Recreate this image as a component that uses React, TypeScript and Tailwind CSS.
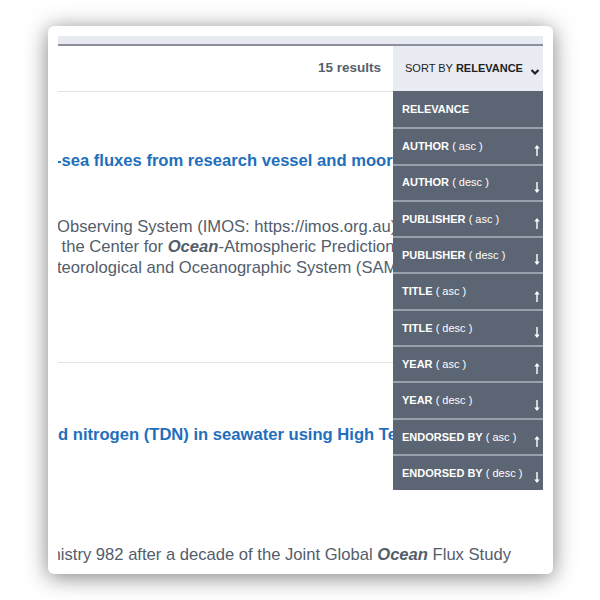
import React from "react";

const items: { label: string; suffix?: string; dir?: "up" | "down" }[] = [
  { label: "RELEVANCE" },
  { label: "AUTHOR", suffix: "( asc )", dir: "up" },
  { label: "AUTHOR", suffix: "( desc )", dir: "down" },
  { label: "PUBLISHER", suffix: "( asc )", dir: "up" },
  { label: "PUBLISHER", suffix: "( desc )", dir: "down" },
  { label: "TITLE", suffix: "( asc )", dir: "up" },
  { label: "TITLE", suffix: "( desc )", dir: "down" },
  { label: "YEAR", suffix: "( asc )", dir: "up" },
  { label: "YEAR", suffix: "( desc )", dir: "down" },
  { label: "ENDORSED BY", suffix: "( asc )", dir: "up" },
  { label: "ENDORSED BY", suffix: "( desc )", dir: "down" },
];

function Arrow({ dir }: { dir: "up" | "down" }) {
  return (
    <svg width="8" height="11" viewBox="0 0 8 11" className={dir === "down" ? "rotate-180" : ""}>
      <path d="M4 0 L1.3 3.6 L6.7 3.6 Z" fill="#ffffff" />
      <rect x="3.3" y="3" width="1.4" height="8" fill="#ffffff" />
    </svg>
  );
}

export default function App() {
  return (
    <div className="w-[600px] h-[600px] bg-white pt-[26px] pl-[48px]" style={{ fontFamily: '"Liberation Sans", Arial, sans-serif' }}>
      <div className="w-[505px] h-[548px] rounded-[6px] bg-white p-[10px] shadow-[0_3px_22px_rgba(0,0,0,0.5)]">
        <div className="relative h-full overflow-hidden">
          <div className="h-[8px] bg-[#e8eaf2]" />
          <div className="h-[2px] bg-[#8c909e]" />
          <div className="flex h-[45px] items-center justify-end">
            <span className="mr-[12px] text-[13.5px] font-bold text-[#555f6d]">15 results</span>
            <div className="flex h-full w-[150px] items-center bg-[#e9ecf3] pl-[12px] text-[11px] text-[#222]">
              <span>SORT BY </span>
              <span className="ml-[3px] font-bold">RELEVANCE</span>
              <svg width="10" height="8" viewBox="0 0 10 8" className="ml-[7px] mt-[7px]">
                <path d="M1.5 2 L5 5.5 L8.5 2" fill="none" stroke="#222" strokeWidth="2.2" />
              </svg>
            </div>
          </div>
          <div className="h-px bg-[#e2e2e2]" />

          <div className="whitespace-nowrap">
            <div className="mt-[59px] -ml-[2px] text-[16.6px] leading-[20px] font-bold text-[#1f6fbd]">-sea fluxes from research vessel and mooring observations</div>
            <div className="mt-[46px] -ml-[1px] text-[16.6px] leading-[20.3px] text-[#535d6b]">
              <div>Observing System (IMOS: https://imos.org.au) and</div>
              <div>&nbsp;the Center for <b><i>Ocean</i></b>-Atmospheric Prediction Studies</div>
              <div>teorological and Oceanographic System (SAMOS)</div>
            </div>
            <div className="mt-[84px] h-px bg-[#e2e2e2]" />
            <div className="mt-[62px] text-[16.6px] leading-[20px] font-bold text-[#1f6fbd]">d nitrogen (TDN) in seawater using High Temperature</div>
            <div className="mt-[100px] -ml-[11px] text-[16.6px] leading-[20px] text-[#535d6b]">
              mistry 982 after a decade of the Joint Global <b><i>Ocean</i></b> Flux Study
            </div>
          </div>

          <div className="absolute right-0 top-[55px] w-[150px] bg-[#5c6573]">
            {items.map((it, i) => (
              <div
                key={i}
                className={
                  "flex h-[36.3px] items-center justify-between pl-[9px] pr-[2px] text-[11px] text-white " +
                  (i > 0 ? "border-t-2 border-[#98a0ab]" : "")
                }
              >
                <span>
                  <span className="font-bold">{it.label}</span>
                  {it.suffix ? <span> {it.suffix}</span> : null}
                </span>
                {it.dir ? (
                  <span className="mt-[9px]">
                    <Arrow dir={it.dir} />
                  </span>
                ) : null}
              </div>
            ))}
          </div>
        </div>
      </div>
    </div>
  );
}
